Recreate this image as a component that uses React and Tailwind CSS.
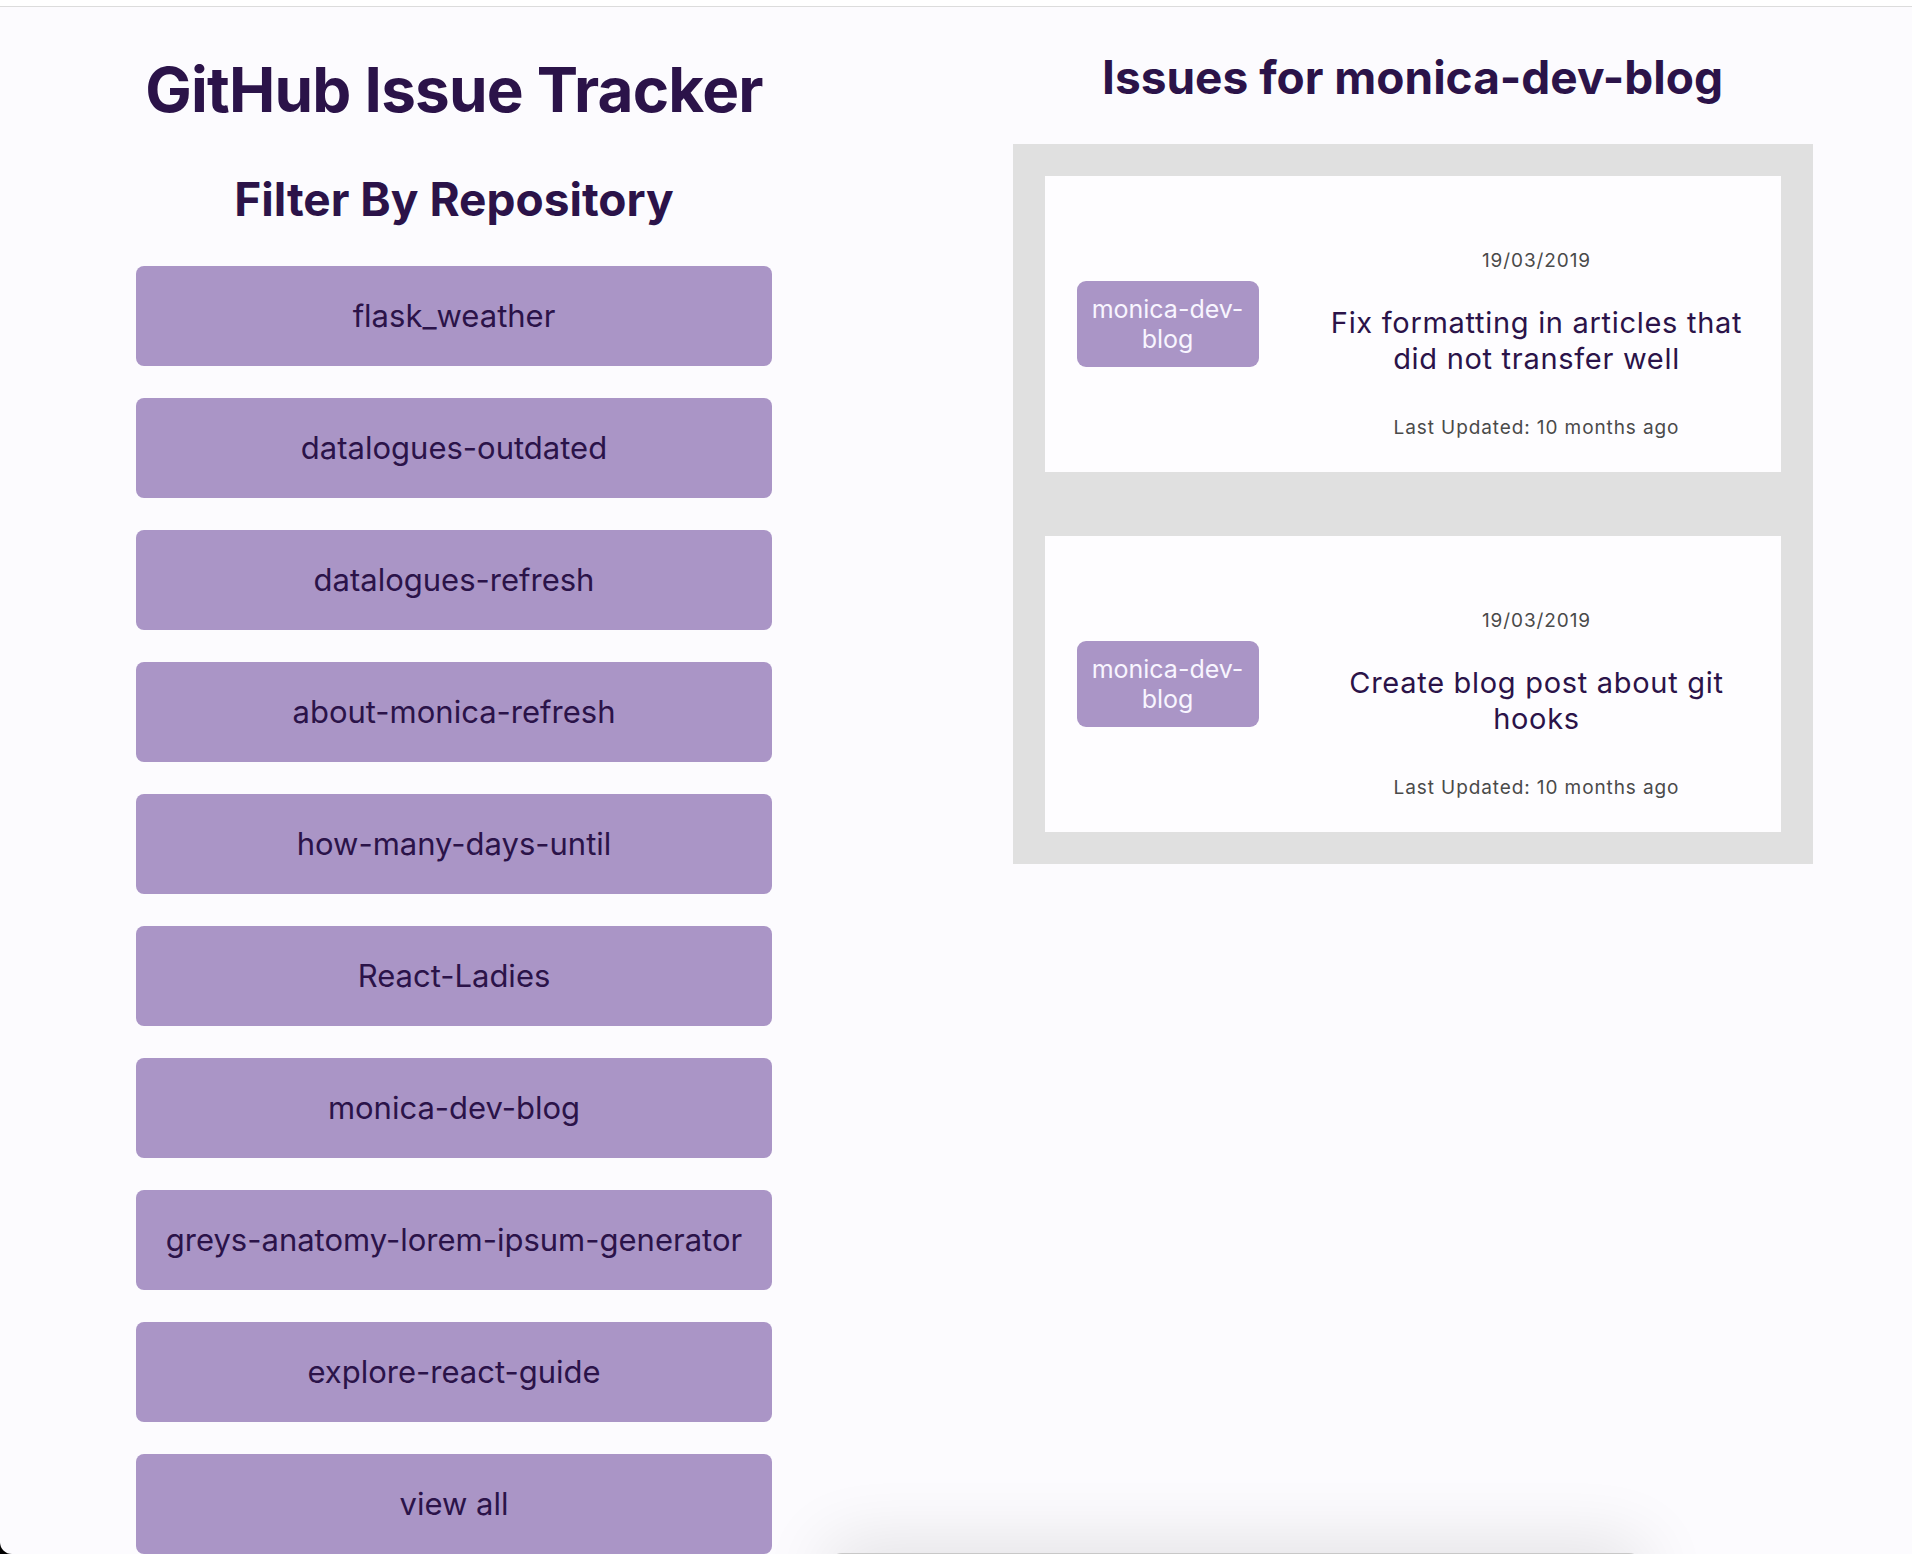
import React from 'react';

const repos = [
  'flask_weather',
  'datalogues-outdated',
  'datalogues-refresh',
  'about-monica-refresh',
  'how-many-days-until',
  'React-Ladies',
  'monica-dev-blog',
  'greys-anatomy-lorem-ipsum-generator',
  'explore-react-guide',
  'view all',
];

const issues = [
  { repo: 'monica-dev-blog', date: '19/03/2019', title: 'Fix formatting in articles that did not transfer well', updated: '10 months ago' },
  { repo: 'monica-dev-blog', date: '19/03/2019', title: 'Create blog post about git hooks', updated: '10 months ago' },
];

const IssueCard = ({ issue }) => (
  <div className="bg-[#fefdff] flex items-center pl-8 py-8">
    <div className="w-[182px] shrink-0 rounded-[9px] bg-[#aa95c6] px-[12px] py-[13px] text-center text-[25px] leading-[30px] text-[#f8f5ff]">
      {issue.repo}
    </div>
    <div className="w-[430px] ml-[63px] pt-[41px] text-center">
      <p className="text-[19px] leading-[24px] tracking-[0.9px] text-[#4a4a4a]">{issue.date}</p>
      <h3 className="mt-[32px] text-[29px] leading-[36px] tracking-[0.7px] text-[#2b1349]">{issue.title}</h3>
      <p className="mt-[39px] text-[19px] leading-[24px] tracking-[0.9px] text-[#4a4a4a]">Last Updated: {issue.updated}</p>
    </div>
  </div>
);

export default function App() {
  return (
    <div className="h-screen overflow-hidden bg-black font-['Inter',sans-serif]">
      <div className="relative h-full overflow-hidden rounded-bl-[12px] bg-[#fcfbfe]">
        <div className="h-[6px] bg-white border-b border-[#dcdcdc] box-content"></div>

        <div className="flex">
          <div className="w-[908px] shrink-0 flex flex-col items-center pt-[52px]">
            <h1 className="text-[62px] leading-none tracking-[-0.8px] font-bold text-[#2b1349]">GitHub Issue Tracker</h1>
            <h2 className="mt-[55px] text-[46px] leading-none font-bold text-[#2b1349]">Filter By Repository</h2>
            <div className="mt-[44px] flex flex-col gap-8">
              {repos.map(r => (
                <button key={r} className="w-[636px] h-[100px] rounded-[8px] bg-[#aa95c6] text-[31px] text-[#2b1349] flex items-center justify-center">
                  {r}
                </button>
              ))}
            </div>
          </div>

          <div className="flex-1 flex flex-col items-center pt-[47px] pl-[5px]">
            <h2 className="text-[46px] leading-none font-bold text-[#2b1349]">Issues for monica-dev-blog</h2>
            <div className="mt-[44px] w-[800px] bg-[#e0e0e0] p-8 flex flex-col gap-16">
              {issues.map((issue, i) => <IssueCard key={i} issue={issue} />)}
            </div>
          </div>
        </div>

        <div className="absolute left-[828px] top-[1553px] w-[815px] h-[60px] rounded-t-[14px] bg-[#f4f4f6] border-t border-[#c8c8c8] shadow-[0_-8px_70px_rgba(0,0,0,0.12)]"></div>
      </div>
    </div>
  );
}
